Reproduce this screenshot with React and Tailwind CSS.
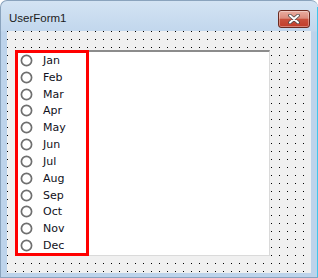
import React from "react";

const months = ["Jan","Feb","Mar","Apr","May","Jun","Jul","Aug","Sep","Oct","Nov","Dec"];

function Radio() {
  return (
    <svg width="13" height="13" viewBox="0 0 13 13" className="shrink-0">
      <circle cx="6.5" cy="6.5" r="5.1" fill="white" stroke="#6f6f6f" strokeWidth="1.7" />
    </svg>
  );
}

export default function App() {
  return (
    <div className="w-[318px] h-[278px] overflow-hidden bg-white">
      <div className="relative w-[318px] h-[278px] rounded-t-[7px] border border-[#8aa3bd] border-r-0 bg-[linear-gradient(180deg,#d3e3f3_0px,#c2d7ed_30px,#bdd3eb_31px,#bdd3eb)] flex flex-col">
        <div className="h-[30px] flex items-start justify-between pl-[8px] pr-[8px]">
          <span className="mt-[11px] text-[11.5px] leading-[13px] text-[#1b1b1b]" style={{ fontFamily: '"Liberation Sans", Arial, sans-serif' }}>UserForm1</span>
          <div className="mt-[9px] w-[32px] h-[18px] rounded-[3px] border border-[#6a2a20] bg-[linear-gradient(180deg,#e9ada1_0%,#dc8c7d_45%,#c9503c_52%,#c23d2a_100%)] flex items-center justify-center shadow-[inset_0_0_0_1px_rgba(255,255,255,0.35)]">
            <svg width="12" height="10" viewBox="0 0 12 10">
              <path d="M2 1.5 L10 8.5 M10 1.5 L2 8.5" stroke="#4a4a4a" strokeWidth="3.6" strokeLinecap="round" />
              <path d="M2 1.5 L10 8.5 M10 1.5 L2 8.5" stroke="#ffffff" strokeWidth="2" strokeLinecap="round" />
            </svg>
          </div>
        </div>
        <div className="relative ml-[6px] w-[304px] h-[242px] bg-[#f0f0f0]">
          <svg className="absolute inset-0" width="304" height="242">
            <defs>
              <pattern id="dots" width="8" height="8" patternUnits="userSpaceOnUse">
                <rect x="0" y="0" width="1" height="1" fill="#000" />
              </pattern>
            </defs>
            <rect width="304" height="242" fill="url(#dots)" />
          </svg>
          <div className="relative ml-[8px] mt-[19px] w-[255px] h-[206px] bg-white border-t-2 border-l-2 border-t-[#8c8c8c] border-l-[#8c8c8c] border-r border-b border-r-[#dadada] border-b-[#dadada]">
            <div className="flex flex-col h-[202px] w-[70px] pl-[3px]" style={{ fontFamily: '"DejaVu Sans", Verdana, sans-serif' }}>
              {months.map((m) => (
                <div key={m} className="flex-1 flex items-center">
                  <Radio />
                  <span className="ml-[10px] text-[11px] leading-none text-[#101020]">{m}</span>
                </div>
              ))}
            </div>
            <div className="absolute -top-[2px] -left-[2px] w-[74px] h-[206px] border-[3px] border-[#ff0000]" />
          </div>
        </div>
        <div className="absolute right-0 top-[6px] bottom-0 w-px bg-[#3fc6ec]" />
      </div>
    </div>
  );
}
